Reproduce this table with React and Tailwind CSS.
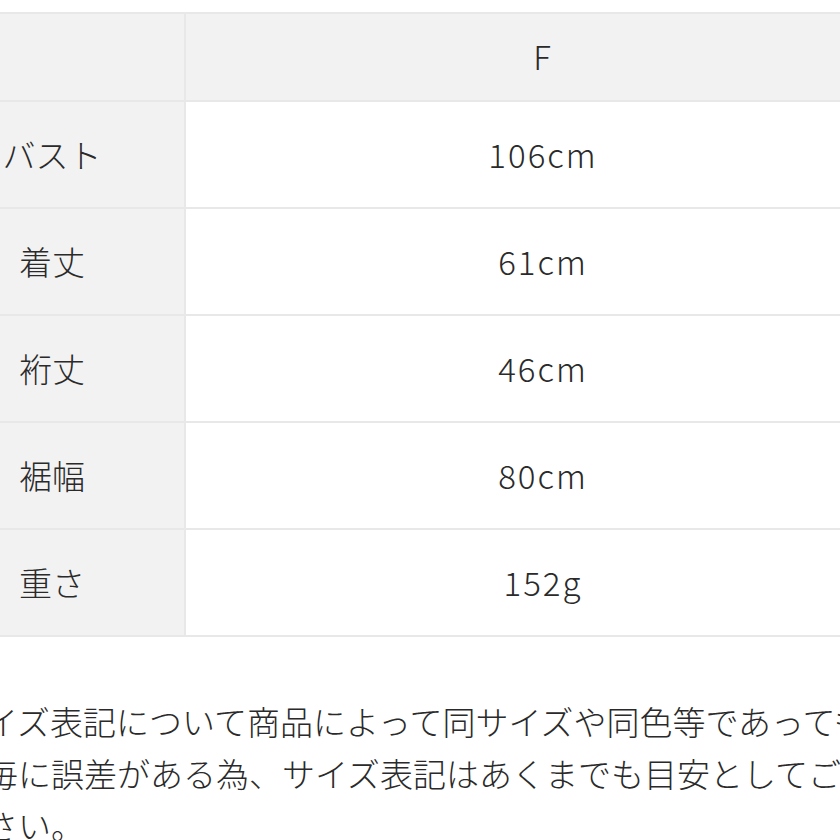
import React from "react";

const rows = [
  { label: "バスト", value: "106cm" },
  { label: "着丈", value: "61cm" },
  { label: "裄丈", value: "46cm" },
  { label: "裾幅", value: "80cm" },
  { label: "重さ", value: "152g" },
];

const font = { fontFamily: '"Noto Sans CJK JP", "Noto Sans", sans-serif' };

const SizeTable = () => {
  return (
    <div className="ml-[-80px] mt-[12px] w-[980px] grid grid-cols-[264px_1fr] gap-[2px] bg-[#e8e8e8] border-y-2 border-[#e8e8e8]">
      <div className="h-[86px] bg-[#f2f2f2]"></div>
      <div className="h-[86px] bg-[#f2f2f2] flex items-center justify-center tracking-[2px]">F</div>
      {rows.map((r) => (
        <React.Fragment key={r.label}>
          <div className="h-[105px] bg-[#f2f2f2] flex items-center justify-center">{r.label}</div>
          <div className="h-[105px] bg-white flex items-center justify-center tracking-[2px]">{r.value}</div>
        </React.Fragment>
      ))}
    </div>
  );
};

export default function App() {
  return (
    <div className="w-[840px] h-[840px] overflow-hidden bg-white text-[#2a2a2a] text-[33px] font-light" style={font}>
      <SizeTable />
      <p className="ml-[-48px] mt-[58px] w-[960px] leading-[52px]">
        サイズ表記について商品によって同サイズや同色等であっても個体毎に誤差がある為、サイズ表記はあくまでも目安としてご参照下さい。
      </p>
    </div>
  );
}
